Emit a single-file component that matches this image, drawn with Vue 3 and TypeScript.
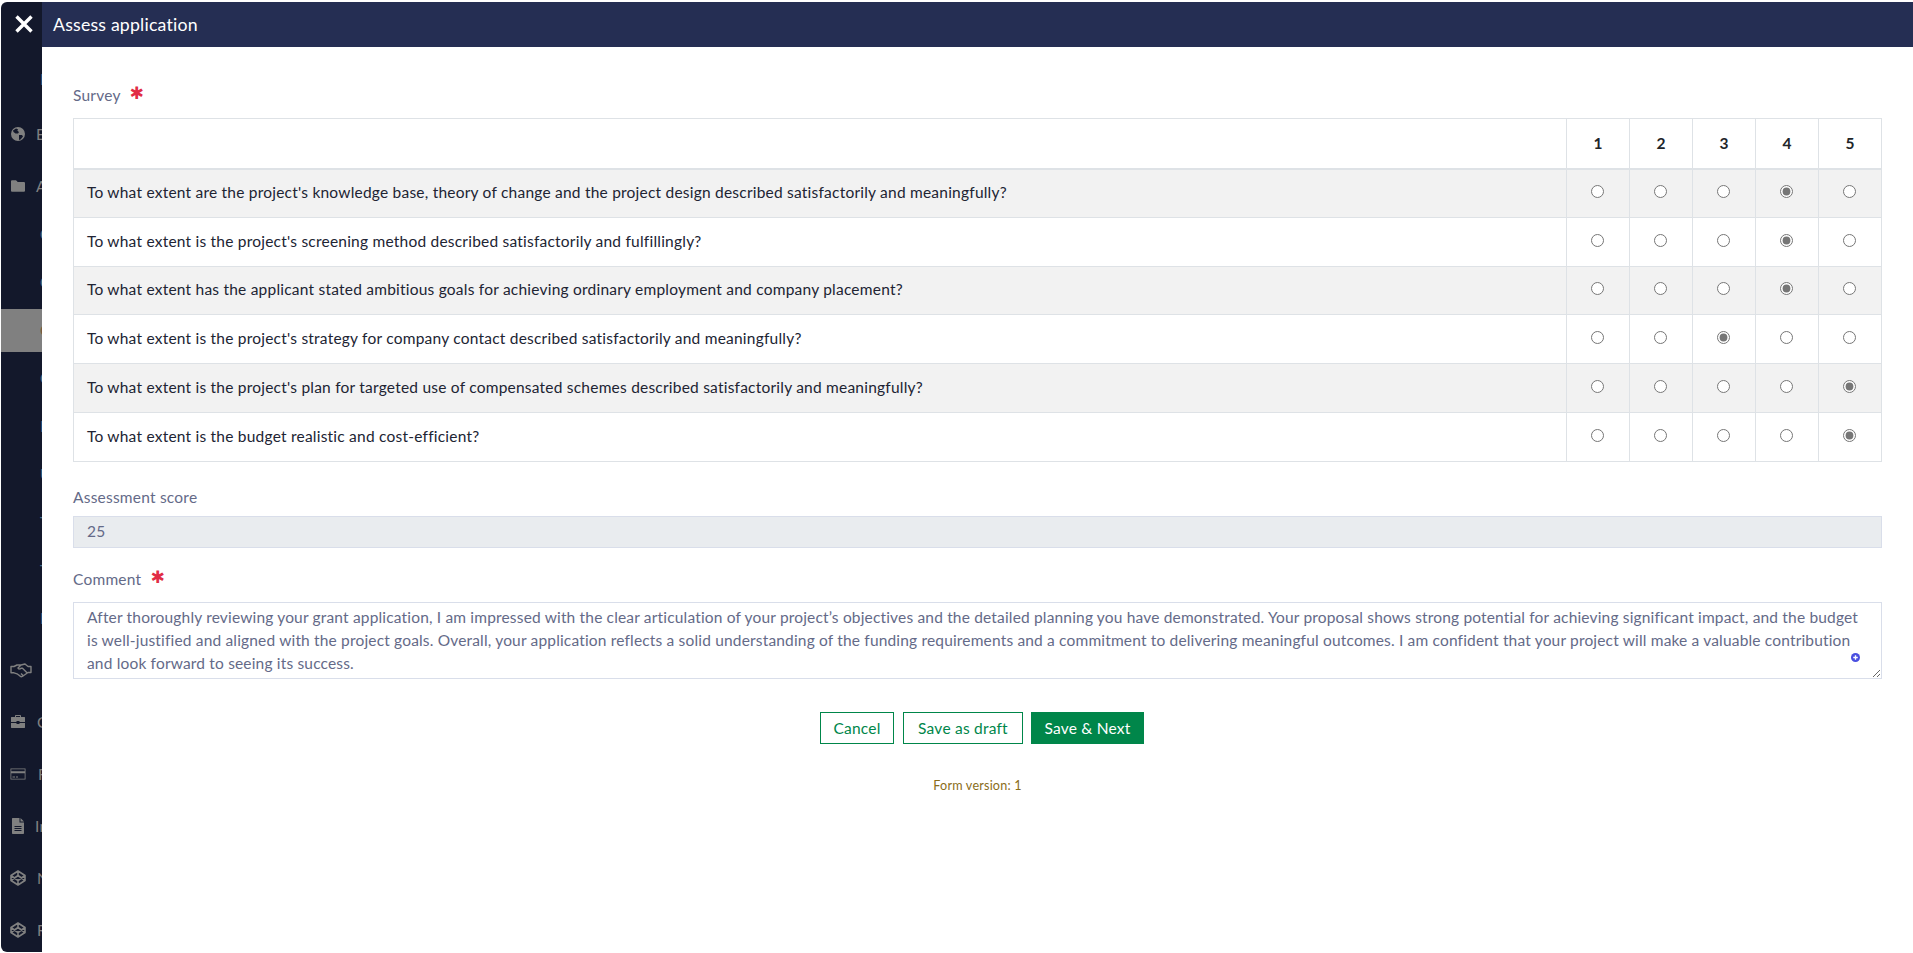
<script setup lang="ts">
interface Question { text: string; value: number }
const scale: number[] = [1, 2, 3, 4, 5]
const questions: Question[] = [
  { text: "To what extent are the project's knowledge base, theory of change and the project design described satisfactorily and meaningfully?", value: 4 },
  { text: "To what extent is the project's screening method described satisfactorily and fulfillingly?", value: 4 },
  { text: "To what extent has the applicant stated ambitious goals for achieving ordinary employment and company placement?", value: 4 },
  { text: "To what extent is the project's strategy for company contact described satisfactorily and meaningfully?", value: 3 },
  { text: "To what extent is the project's plan for targeted use of compensated schemes described satisfactorily and meaningfully?", value: 5 },
  { text: "To what extent is the budget realistic and cost-efficient?", value: 5 },
]
const comment = "After thoroughly reviewing your grant application, I am impressed with the clear articulation of your project\u2019s objectives and the detailed planning you have demonstrated. Your proposal shows strong potential for achieving significant impact, and the budget is well-justified and aligned with the project goals. Overall, your application reflects a solid understanding of the funding requirements and a commitment to delivering meaningful outcomes. I am confident that your project will make a valuable contribution and look forward to seeing its success."
const subItems: string[] = ['Calls', 'Open', 'Closed', 'Grants', 'Reports', 'Users', 'Tasks', 'Teams', 'Forms']
</script>

<template>
  <div class="shell">
    <aside class="sidebar">
      <div class="top">
        <svg class="close" viewBox="0 0 20 20"><path d="M2.500 2.500 17.500 17.500M17.500 2.500 2.500 17.500" /></svg>
        <span class="top-sub">Home</span>
      </div>
      <div class="item">
        <svg class="ico" viewBox="0 0 16 16"><path fill-rule="evenodd" d="M8 1a7 7 0 1 0 0 14A7 7 0 0 0 8 1ZM3 4.500l3-2 2 .7-.6 1.600 1.600 1.200-1 1.600H5.500L3.500 6ZM9 9h3l1 1.500-2.500 3-1.500.5Z" /></svg>
        <span class="lbl">Explore</span>
      </div>
      <div class="item">
        <svg class="ico" viewBox="0 0 16 16"><path d="M1 3.500C1 2.700 1.500 2.300 2.300 2.300H6l1.700 1.700h6c.8 0 1.300.5 1.300 1.300v7.200c0 .8-.5 1.300-1.300 1.300H2.300c-.8 0-1.300-.5-1.300-1.300Z" /></svg>
        <span class="lbl lbl-a">Applications</span>
      </div>
      <div class="subs">
        <div v-for="(s, i) in subItems" :key="s" class="sub">
          <div class="sub-inner" :class="{ active: i === 2 }"><span>{{ s }}</span></div>
        </div>
      </div>
      <div class="item">
        <svg class="ico wide line" viewBox="0 0 22 16"><path d="M1 4.500h3L7 3h4l4-1 3 2.500h3v6h-3L13 14l-2 .8-4-3-3-1H1ZM11 3 8 6c.8 1.200 2 1.200 3 .2h1.500l4.500 4.500M9 13.300l1.500 1.200M11 11.500l2 2" /></svg>
        <span class="lbl lbl-c">Collaboration</span>
      </div>
      <div class="item">
        <svg class="ico" viewBox="0 0 16 16"><path fill-rule="evenodd" d="M5 3V2c0-.6.400-1 1-1h4c.6 0 1 .4 1 1v1h3.500c.3 0 .5.200.5.500V8H9.500V7h-3v1H1V3.500c0-.3.200-.5.500-.5ZM6 3h4V2H6ZM1 9h5.500v1h3V9H15v4.500c0 .3-.2.5-.5.500h-13c-.3 0-.5-.2-.5-.5Z" /></svg>
        <span class="lbl lbl-o">Organisation</span>
      </div>
      <div class="item">
        <svg class="ico" viewBox="0 0 16 16"><path fill-rule="evenodd" d="M.5 2.500h15v11H.5ZM1.300 3.300v1.900h13.400V3.300ZM1.300 7.200v5.500h13.400V7.200ZM2.500 10.500h2.500v1H2.500ZM6 10.500h2v1H6Z" /></svg>
        <span class="lbl lbl-f">Finance</span>
      </div>
      <div class="item">
        <svg class="ico" viewBox="0 0 16 16"><path fill-rule="evenodd" d="M2.500 0H9.500v4.500H14V15c0 .6-.4 1-1 1H3c-.6 0-1-.4-1-1V.5ZM10.500 0 14 3.500h-3.500ZM4.500 8v1h7V8ZM4.500 10v1h7v-1ZM4.500 12v1h7v-1Z" /></svg>
        <span class="lbl lbl-i">Invoices</span>
      </div>
      <div class="item">
        <svg class="ico line" viewBox="0 0 16 16"><path d="M8 1 15 5.500v5L8 15 1 10.500v-5ZM8 1v4.500M8 15v-4.500M1 5.500 8 10.500 15 5.500M1 10.500 8 5.500l7 5" /></svg>
        <span class="lbl lbl-o">News</span>
      </div>
      <div class="item">
        <svg class="ico line" viewBox="0 0 16 16"><path d="M8 1 15 5.500v5L8 15 1 10.500v-5ZM8 1v4.500M8 15v-4.500M1 5.500 8 10.500 15 5.500M1 10.500 8 5.500l7 5" /></svg>
        <span class="lbl lbl-o">Reports</span>
      </div>
    </aside>

    <main class="panel">
      <header class="bar">Assess application</header>
      <form class="form" @submit.prevent>
        <div class="label first">Survey <span class="req">✱</span></div>
        <table class="survey">
          <thead>
            <tr>
              <th class="blank"></th>
              <th v-for="n in scale" :key="n" class="num">{{ n }}</th>
            </tr>
          </thead>
          <tbody>
            <tr v-for="(q, qi) in questions" :key="qi">
              <td>{{ q.text }}</td>
              <td v-for="n in scale" :key="n" class="opt">
                <input type="radio" :name="'q' + qi" :value="n" :checked="q.value === n" />
              </td>
            </tr>
          </tbody>
        </table>

        <div class="label score-label">Assessment score</div>
        <input class="score" type="text" value="25" disabled />

        <div class="label comment-label">Comment <span class="req">✱</span></div>
        <div class="area-wrap">
          <textarea class="area" :value="comment" spellcheck="false"></textarea>
          <svg class="badge" viewBox="0 0 10 10"><circle cx="5" cy="5" r="5" fill="#4a4fe0" /><path d="M5 2.500v5M2.500 5h5" stroke="#fff" stroke-width="1.500" /></svg>
        </div>

        <div class="actions">
          <button type="button" class="btn cancel">Cancel</button>
          <button type="button" class="btn draft">Save as draft</button>
          <button type="button" class="btn primary">Save &amp; Next</button>
        </div>
        <div class="version">Form version: 1</div>
      </form>
    </main>
  </div>
</template>

<style>
html, body { margin: 0; height: 100%; overflow: hidden; background: #fff; }
</style>

<style scoped>
.shell {
  display: flex;
  height: 953px;
  box-sizing: border-box;
  padding: 2px 0 1px 1px;
  font-family: Lato, "Noto Sans", sans-serif;
  font-size: 15.5px;
  letter-spacing: 0.22px;
  overflow: hidden;
}
.sidebar {
  width: 41px;
  flex: none;
  background: #13182b;
  border-radius: 6px 0 0 6px;
  overflow: hidden;
  color: #808080;
}
.top { position: relative; height: 106px; }
.close { position: absolute; left: 13px; top: 12px; width: 20px; height: 20px; }
.close path { stroke: #fff; stroke-width: 3.4; fill: none; }
.top-sub { position: absolute; left: 39px; top: 68px; color: #4b6f86; }
.item { height: 52px; display: flex; align-items: center; padding-left: 9px; white-space: nowrap; }
.ico { width: 16px; height: 16px; flex: none; fill: #808080; }
.ico.line { fill: none; stroke: #808080; stroke-width: 1.6; stroke-linejoin: round; }
.ico.wide { width: 22px; stroke-width: 1.4; }
.lbl { margin-left: 10px; }
.lbl-a { margin-left: 10px; }
.lbl-c { margin-left: 10px; }
.lbl-o { margin-left: 11px; }
.lbl-f { margin-left: 12px; }
.lbl-i { margin-left: 9px; }
.subs { margin: -2px 0 2px; }
.sub { height: 48px; display: flex; align-items: center; white-space: nowrap; }
.sub-inner { width: 100%; height: 43px; display: flex; align-items: center; padding-left: 39px; color: #4b6f86; box-sizing: border-box; }
.sub-inner.active { background: #808080; color: #7a5a3c; }
.panel {
  flex: 1;
  min-width: 0;
  background: #fff;
  display: flex;
  flex-direction: column;
}
.bar {
  height: 45px;
  flex: none;
  background: #252e53;
  color: #fff;
  font-size: 17.7px;
  display: flex;
  align-items: center;
  padding-left: 11px;
  letter-spacing: 0.2px;
}
.form { padding: 0 31px; color: #212433; }
.label { color: #646a88; line-height: 21px; }
.first { margin-top: 38px; }
.req { color: #e12d45; font-family: "DejaVu Sans", sans-serif; font-size: 17px; margin-left: 5px; position: relative; top: -2px; line-height: 1; }
.survey {
  width: 100%;
  margin-top: 12px;
  border-collapse: collapse;
  table-layout: fixed;
}
.survey th, .survey td { border: 1px solid #dee2e6; padding: 0 13px 2px; height: 48.8px; box-sizing: border-box; }
.survey thead th { border-bottom-width: 2px; height: 50px; font-weight: 700; }
.num { width: 63px; text-align: center; }
.survey th.num { padding: 0; color: #212529; }
.survey td.opt { padding: 0 1px 0 0; }
.survey tbody tr:nth-child(odd) { background: #f2f2f2; }
.opt input { display: block; margin: 0 auto 3px; width: 13px; height: 13px; accent-color: #767676; }
.score-label { margin-top: 25px; }
.score {
  display: block;
  width: 100%;
  box-sizing: border-box;
  height: 32px;
  margin-top: 8px;
  padding: 0 13px 2px;
  background: #e9ecef;
  border: 1px solid #d9deea;
  font: inherit;
  letter-spacing: inherit;
  color: #646a88;
}
.comment-label { margin-top: 21px; }
.area-wrap { position: relative; margin-top: 12px; }
.area {
  display: block;
  width: 100%;
  height: 77px;
  box-sizing: border-box;
  padding: 3px 13px;
  border: 1px solid #d9deea;
  font: inherit;
  letter-spacing: 0.17px;
  line-height: 23px;
  color: #646a88;
  resize: vertical;
  overflow: hidden;
  outline: none;
}
.badge { position: absolute; right: 22px; bottom: 17px; width: 9px; height: 9px; }
.actions { display: flex; justify-content: center; gap: 8px; margin-top: 33px; padding-left: 9px; }
.btn {
  height: 32px;
  padding: 0;
  box-sizing: border-box;
  background: #fff;
  color: #00864a;
  border: 1px solid #00864a;
  font: inherit;
  letter-spacing: inherit;
}
.cancel { width: 74px; margin-right: 1px; }
.draft { width: 120px; }
.btn.primary { width: 113px; background: #00864a; color: #fff; }
.version { margin-top: 34px; text-align: center; font-size: 12.6px; color: #8a6d1a; letter-spacing: 0.2px; }
</style>
